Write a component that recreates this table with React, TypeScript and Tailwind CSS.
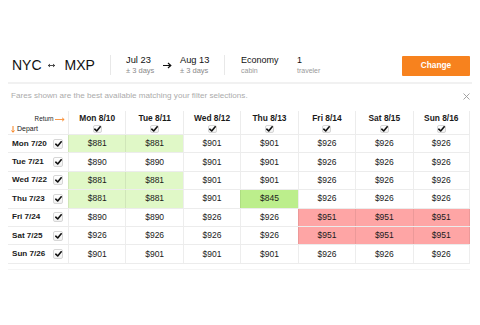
import React from "react";

type Cell = { p: string; c?: "g" | "G" | "r" };

const cols = ["Mon 8/10", "Tue 8/11", "Wed 8/12", "Thu 8/13", "Fri 8/14", "Sat 8/15", "Sun 8/16"];

const g = (p: string): Cell => ({ p, c: "g" });
const G = (p: string): Cell => ({ p, c: "G" });
const r = (p: string): Cell => ({ p, c: "r" });
const n = (p: string): Cell => ({ p });

const rows: { label: string; cells: Cell[] }[] = [
  { label: "Mon 7/20", cells: [g("$881"), g("$881"), n("$901"), n("$901"), n("$926"), n("$926"), n("$926")] },
  { label: "Tue 7/21", cells: [n("$890"), n("$890"), n("$901"), n("$901"), n("$926"), n("$926"), n("$926")] },
  { label: "Wed 7/22", cells: [g("$881"), g("$881"), n("$901"), n("$901"), n("$926"), n("$926"), n("$926")] },
  { label: "Thu 7/23", cells: [g("$881"), g("$881"), n("$901"), G("$845"), n("$926"), n("$926"), n("$926")] },
  { label: "Fri 7/24", cells: [n("$890"), n("$890"), n("$926"), n("$926"), r("$951"), r("$951"), r("$951")] },
  { label: "Sat 7/25", cells: [n("$926"), n("$926"), n("$926"), n("$926"), r("$951"), r("$951"), r("$951")] },
  { label: "Sun 7/26", cells: [n("$901"), n("$901"), n("$901"), n("$901"), n("$926"), n("$926"), n("$926")] },
];

function Check({ size }: { size: "s" | "m" }) {
  const box = size === "s" ? "w-[9px] h-[8px]" : "w-[10px] h-[10px]";
  return (
    <div
      className={`${box} flex items-center justify-center rounded-[2px] border border-[#d6d6d6] bg-gradient-to-b from-white to-[#f1f1f1]`}
    >
      <svg width="7" height="6" viewBox="0 0 7 6" className="block">
        <path d="M0.8 3.2 L2.7 5 L6.2 0.8" fill="none" stroke="#111" strokeWidth="1.6" strokeLinecap="round" strokeLinejoin="round" />
      </svg>
    </div>
  );
}

function bgOf(c?: string) {
  if (c === "g") return "bg-[#e0f8c7]";
  if (c === "G") return "bg-[#bcee8c]";
  if (c === "r") return "bg-[#fea5a5]";
  return "bg-white";
}

export default function App() {
  return (
    <div
      className="w-[480px] h-[325px] bg-white text-[#1a1a1a] overflow-hidden"
      style={{ fontFamily: '"Liberation Sans", Arial, sans-serif' }}
    >
      {/* Header */}
      <div className="pt-[51px] h-[79px] flex items-center">
        <div className="ml-[12px] w-[98px] flex items-center text-[14px] leading-none text-[#111]">
          <span>NYC</span>
          <svg width="7" height="5" viewBox="0 0 7 5" className="ml-[6px] mr-[10px] mt-[1px]">
            <path d="M0.3 2.5 H6.7 M0.3 2.5 L2 1 M0.3 2.5 L2 4 M6.7 2.5 L5 1 M6.7 2.5 L5 4" stroke="#222" strokeWidth="0.8" fill="none" />
          </svg>
          <span>MXP</span>
        </div>
        <div className="w-px h-[20px] bg-[#e8e8e8]" />
        <div className="ml-[15px] w-[37px] flex flex-col">
          <span className="text-[9.3px] leading-[11px] text-[#111]">Jul 23</span>
          <span className="text-[7.5px] leading-[9px] text-[#8a8a8a]">± 3 days</span>
        </div>
        <div className="w-[17px] flex items-center">
          <svg width="9" height="7" viewBox="0 0 9 7">
            <path d="M0 3.5 H7.5 M5 1 L7.8 3.5 L5 6" stroke="#111" strokeWidth="1.2" fill="none" />
          </svg>
        </div>
        <div className="w-[44px] flex flex-col">
          <span className="text-[9.3px] leading-[11px] text-[#111]">Aug 13</span>
          <span className="text-[7.5px] leading-[9px] text-[#8a8a8a]">± 3 days</span>
        </div>
        <div className="w-px h-[20px] bg-[#e8e8e8]" />
        <div className="ml-[16px] w-[56px] flex flex-col">
          <span className="text-[9px] leading-[11px] text-[#111]">Economy</span>
          <span className="text-[7px] leading-[9px] text-[#9a9a9a]">cabin</span>
        </div>
        <div className="flex flex-col">
          <span className="text-[9px] leading-[11px] text-[#111]">1</span>
          <span className="text-[7px] leading-[9px] text-[#9a9a9a]">traveler</span>
        </div>
        <div className="ml-auto mr-[10px] w-[68px] h-[20px] mt-[1px] bg-[#f7821e] rounded-[1px] flex items-center justify-center text-white font-bold text-[8.3px]">
          Change
        </div>
      </div>

      {/* separator */}
      <div className="mx-[8px] mt-[3px] h-[2px] bg-[#f1f1f1]" />

      {/* info line */}
      <div className="mt-[7px] ml-[11px] mr-[10px] h-[10px] flex items-center justify-between">
        <span className="text-[8.1px] leading-[10px] text-[#ababab]">
          Fares shown are the best available matching your filter selections.
        </span>
        <svg width="7" height="7" viewBox="0 0 7 7">
          <path d="M0.5 0.5 L6.5 6.5 M6.5 0.5 L0.5 6.5" stroke="#9a9a9a" strokeWidth="0.9" />
        </svg>
      </div>

      {/* table */}
      <div className="mt-[10px] ml-[8px] w-[462px]">
        <div className="grid grid-cols-[60px_repeat(7,1fr)] h-[24px] border-b border-[#ececec]">
          <div className="relative">
            <div className="absolute right-[3px] top-[4px] flex items-center text-[6.3px] leading-[8px] text-[#222]">
              <span>Return</span>
              <svg width="10" height="5" viewBox="0 0 10 5" className="ml-[1.5px]">
                <path d="M0 2.5 H9 M7 0.8 L9.2 2.5 L7 4.2" stroke="#f7821e" strokeWidth="0.8" fill="none" />
              </svg>
            </div>
            <div className="absolute left-[3px] top-[13px] flex items-center text-[7px] leading-[9px] text-[#222]">
              <svg width="4" height="7" viewBox="0 0 4 7" className="mr-[2px] mt-[2px]">
                <path d="M2 0 V6 M0.5 4.5 L2 6.3 L3.5 4.5" stroke="#f7821e" strokeWidth="1" fill="none" />
              </svg>
              <span>Depart</span>
            </div>
          </div>
          {cols.map((c, i) => (
            <div
              key={c}
              className={`flex flex-col items-center border-l border-[#ececec] ${i === 6 ? "border-r" : ""}`}
            >
              <span className="mt-[1.5px] text-[8.4px] leading-[10px] font-bold text-[#1a1a1a]">{c}</span>
              <div className="mt-[2px]">
                <Check size="s" />
              </div>
            </div>
          ))}
        </div>
        {rows.map((row) => (
          <div key={row.label} className="grid grid-cols-[60px_repeat(7,1fr)] h-[18.4px] border-b border-[#ececec]">
            <div className="flex items-center justify-between pl-[4px] pr-[5px]">
              <span className="text-[8.1px] font-bold text-[#1a1a1a]">{row.label}</span>
              <Check size="m" />
            </div>
            {row.cells.map((cell, i) => (
              <div
                key={i}
                className={`flex items-center justify-center border-l border-[#00000012] ${i === 6 ? "border-r" : ""} ${bgOf(cell.c)} text-[8.5px] text-[#1a1a1a]`}
              >
                {cell.p}
              </div>
            ))}
          </div>
        ))}
        <div className="mt-[5px] h-px bg-[#f5f5f5]" />
      </div>
    </div>
  );
}
